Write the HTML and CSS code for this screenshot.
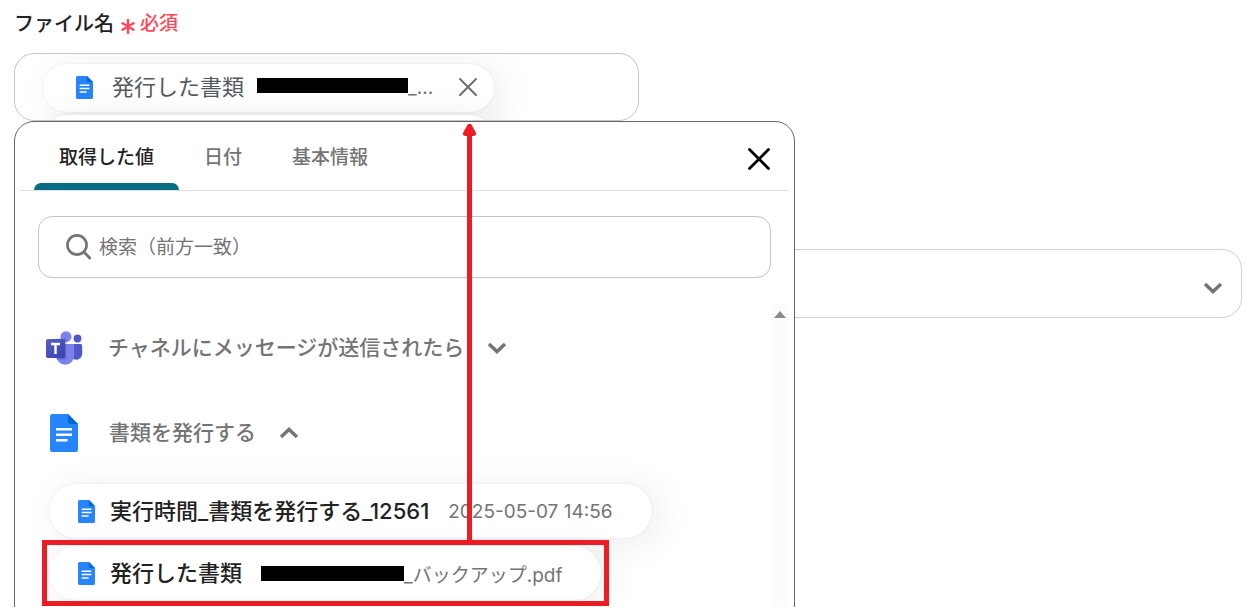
FILE: index.html
```html
<!DOCTYPE html>
<html lang="ja">
<head>
  <meta charset="UTF-8">
  <title>ファイル名</title>
  <link rel="stylesheet" href="styles.css">
</head>
<body>
  <svg class="defs" aria-hidden="true">
    <symbol id="doc" viewBox="0 0 28 38">
      <path fill="#2684fc" d="M2.500 0H18l10 10v25.500a2.500 2.500 0 0 1-2.500 2.500h-23A2.500 2.500 0 0 1 0 35.500v-33A2.500 2.500 0 0 1 2.500 0z"/>
      <path fill="#0066da" d="M18 0l10 10H20a2 2 0 0 1-2-2z"/>
      <path fill="#fff" d="M6 14h16v2.500H6zM6 19.500h16V22H6zM6 25h11.500v2.500H6z"/>
    </symbol>
    <symbol id="chevron" viewBox="0 0 20 12">
      <path fill="none" stroke="#747474" stroke-width="3.400" d="M2 2l8 7.600L18 2"/>
    </symbol>
  </svg>

  <main class="form">
    <div class="picker">
      <h2 class="label">ファイル名
        <span class="required">
          <svg width="14" height="20" viewBox="0 0 14 20"><path stroke="#ff4757" stroke-width="2.400" stroke-linecap="round" d="M7 6v13M1.500 9.300l11 6.400M12.500 9.300l-11 6.400"/></svg>
          必須
        </span>
      </h2>

      <div class="tokens">
        <div class="token">
          <svg class="doc-s"><use href="#doc"/></svg>
          <span class="token-name">発行した書類</span>
          <span class="mask"></span>
          <span class="rest">_...</span>
          <button class="remove" aria-label="削除">
            <svg width="20" height="20" viewBox="0 0 20 20"><path stroke="#6e6e6e" stroke-width="2" stroke-linecap="round" d="M2 2l16 16M18 2L2 18"/></svg>
          </button>
        </div>
        <div class="token"></div>
      </div>

      <section class="panel">
        <div class="tabs">
          <button class="tab active">取得した値</button>
          <button class="tab">日付</button>
          <button class="tab">基本情報</button>
          <button class="close" aria-label="閉じる">
            <svg width="24" height="24" viewBox="0 0 24 24"><path stroke="#000" stroke-width="2.800" stroke-linecap="round" d="M2.500 2.500l19 19M21.500 2.500l-19 19"/></svg>
          </button>
        </div>

        <label class="search">
          <svg width="26" height="26" viewBox="0 0 26 26"><circle cx="11" cy="11" r="9.600" fill="none" stroke="#747474" stroke-width="2.600"/><path stroke="#747474" stroke-width="2.800" stroke-linecap="round" d="M18.200 18.200l5.600 5.800"/></svg>
          <input type="text" placeholder="検索（前方一致）" aria-label="検索">
        </label>

        <div class="results">
          <div class="groups">
            <button class="group">
              <svg class="group-icon" width="38" height="34" viewBox="0 0 38 34">
                <defs>
                  <linearGradient id="tile" x1="0" y1="0" x2="1" y2="1">
                    <stop offset="0" stop-color="#5a62c3"/>
                    <stop offset="1" stop-color="#3940ab"/>
                  </linearGradient>
                </defs>
                <circle cx="32.500" cy="7.500" r="3.900" fill="#5059c9"/>
                <path fill="#5059c9" d="M26 13h9.500a1.700 1.700 0 0 1 1.700 1.700v8.100a6 6 0 0 1-10.200 4.200z"/>
                <circle cx="21" cy="5.700" r="5.500" fill="#7b83eb"/>
                <path fill="#7b83eb" d="M13 13h14.500a1.600 1.600 0 0 1 1.600 1.600v9.900a9 9 0 0 1-18 .500V15z"/>
                <path fill="#3c449f" opacity=".35" d="M11 7.500h9a1.500 1.500 0 0 1 1.500 1.500v17.500a2 2 0 0 1-2 2h-8z"/>
                <rect x="1" y="8" width="19" height="19" rx="1.700" fill="url(#tile)"/>
                <path stroke="#fff" stroke-width="2.400" d="M6 13h9M10.500 13v10"/>
              </svg>
              <span class="group-name">チャネルにメッセージが送信されたら</span>
              <svg class="chev"><use href="#chevron"/></svg>
            </button>

            <button class="group">
              <svg class="group-icon doc-l"><use href="#doc"/></svg>
              <span class="group-name">書類を発行する</span>
              <svg class="chev up"><use href="#chevron"/></svg>
            </button>

            <div class="items">
              <div class="item">
                <svg class="doc-s"><use href="#doc"/></svg>
                <span class="item-name">実行時間_書類を発行する_12561</span>
                <span class="value">2025-05-07 14:56</span>
              </div>
              <div class="item">
                <svg class="doc-s"><use href="#doc"/></svg>
                <span class="item-name">発行した書類</span>
                <span class="value"><span class="mask short"></span>_バックアップ.pdf</span>
                <div class="frame">
                  <svg class="arrow" width="14" height="421" viewBox="0 0 14 421"><path fill="#ed1c24" d="M5 0h3l4 7 1 2v2l-2 1H9v409H4V12H2l-2-1V9l1-2z"/></svg>
                </div>
              </div>
            </div>
          </div>
          <div class="scroll"></div>
        </div>
      </section>
    </div>

    <button class="dropdown" aria-label="選択">
      <svg class="chev"><use href="#chevron"/></svg>
    </button>
  </main>
</body>
</html>
```

FILE: styles.css
```css
* {
  box-sizing: border-box;
}

body {
  margin: 0;
  height: 100vh;
  overflow: hidden;
  background: #fff;
  color: #222;
  font-family: Inter, "Noto Sans CJK JP", sans-serif;
}

button, input {
  font-family: inherit;
  color: inherit;
  background: none;
  border: none;
  padding: 0;
}

svg {
  display: block;
  flex: none;
}

.defs {
  position: absolute;
  width: 0;
  height: 0;
}

.form {
  padding: 8px 5px 0 14px;
}

.picker {
  position: relative;
  max-width: 781px;
}

.label {
  display: flex;
  align-items: center;
  gap: 7px;
  margin: 0 0 13px;
  font-size: 20px;
  font-weight: 500;
  line-height: 32px;
}

.required {
  display: flex;
  align-items: center;
  gap: 5px;
  color: #ff4757;
  font-size: 19px;
}

.tokens {
  width: 80%;
  height: 68px;
  padding: 10px 28px;
  border: 1px solid #c4c4c4;
  border-radius: 20px;
  overflow: hidden;
}

.token, .item {
  display: flex;
  align-items: center;
  width: max-content;
  background: #fff;
  border-radius: 30px;
  box-shadow: 8px 4px 36px rgba(0, 0, 0, 0.08), 0 0 2px rgba(0, 0, 0, 0.1);
}

.token {
  position: relative;
  height: 48px;
  min-width: 451px;
  margin-bottom: 3px;
  padding: 0 16px 2px 33px;
  color: #555a60;
  font-size: 22px;
}

.doc-s {
  width: 17px;
  height: 23px;
}

.token-name {
  margin: 0 13px 0 19px;
  padding-bottom: 4px;
}

.mask {
  display: inline-block;
  width: 151px;
  height: 15px;
  background: #000;
}

.token .mask {
  margin-bottom: 4px;
}

.rest {
  color: #747474;
  font-size: 19px;
}

.remove {
  margin-left: auto;
}

.panel {
  position: absolute;
  top: 100%;
  left: 0;
  width: 100%;
  padding: 0 5px;
  background: #fff;
  border: 1px solid #666;
  border-radius: 20px;
}

.tabs {
  display: flex;
  height: 69px;
  padding-left: 14px;
  border-bottom: 1px solid #e0e0e0;
}

.tab {
  position: relative;
  padding: 0 25px 2px;
  color: #747474;
  font-size: 19px;
  font-weight: 500;
}

.active {
  color: #222;
}

.active::after {
  content: "";
  position: absolute;
  left: 0;
  right: 0;
  bottom: 0;
  height: 7px;
  background: #086c84;
  border-radius: 7px 7px 0 0;
}

.close {
  margin: 6px 18px 0 auto;
}

.search {
  display: flex;
  align-items: center;
  gap: 7px;
  height: 62px;
  margin: 25px 18px;
  padding: 0 27px;
  border: 1px solid #c4c4c4;
  border-radius: 14px;
}

.search input {
  flex: 1;
  font-size: 19px;
  outline: none;
}

.search input::placeholder {
  color: #747474;
  opacity: 1;
}

.results {
  display: flex;
}

.groups {
  flex: 1;
  padding-left: 25px;
}

.group {
  display: flex;
  align-items: center;
  height: 85px;
  margin-top: 2px;
  color: #747474;
  font-size: 21px;
  font-weight: 500;
}

.group + .group {
  margin-top: 0;
}

.group-icon {
  margin-right: 25px;
}

.group-name {
  padding-bottom: 3px;
}

.doc-l {
  width: 28px;
  height: 38px;
  margin: 0 31px 0 5px;
}

.chev {
  width: 20px;
  height: 12px;
  margin-left: 23px;
}

.up {
  transform: rotate(180deg);
}

.items {
  display: flex;
  flex-direction: column;
  gap: 8px;
  padding: 9px 0 24px 4px;
}

.item {
  position: relative;
  height: 54px;
  padding: 0 39px 0 29px;
}

.item-name {
  margin: 0 19px 0 15px;
  padding-bottom: 4px;
  font-size: 22px;
  font-weight: 500;
}

.value {
  display: flex;
  align-items: center;
  color: #747474;
  font-size: 19px;
}

.short {
  width: 143px;
}

/* red callout around the chosen value */
.frame {
  position: absolute;
  inset: -6px -8px -6px -7px;
  border: 5px solid #ed1c24;
}

.arrow {
  position: absolute;
  bottom: 100%;
  left: 416px;
}

.scroll {
  width: 18px;
  background: #fcfcfc;
}

.scroll::before {
  content: "";
  display: block;
  margin: 8px 3px;
  border: 6px solid transparent;
  border-top: none;
  border-bottom: 7px solid #8b8b8b;
}

.dropdown {
  display: flex;
  align-items: center;
  justify-content: flex-end;
  width: 100%;
  height: 69px;
  margin-top: 128px;
  padding: 8px 18px 0 0;
  border: 1px solid #cfcfd4;
  border-radius: 20px;
}
```
